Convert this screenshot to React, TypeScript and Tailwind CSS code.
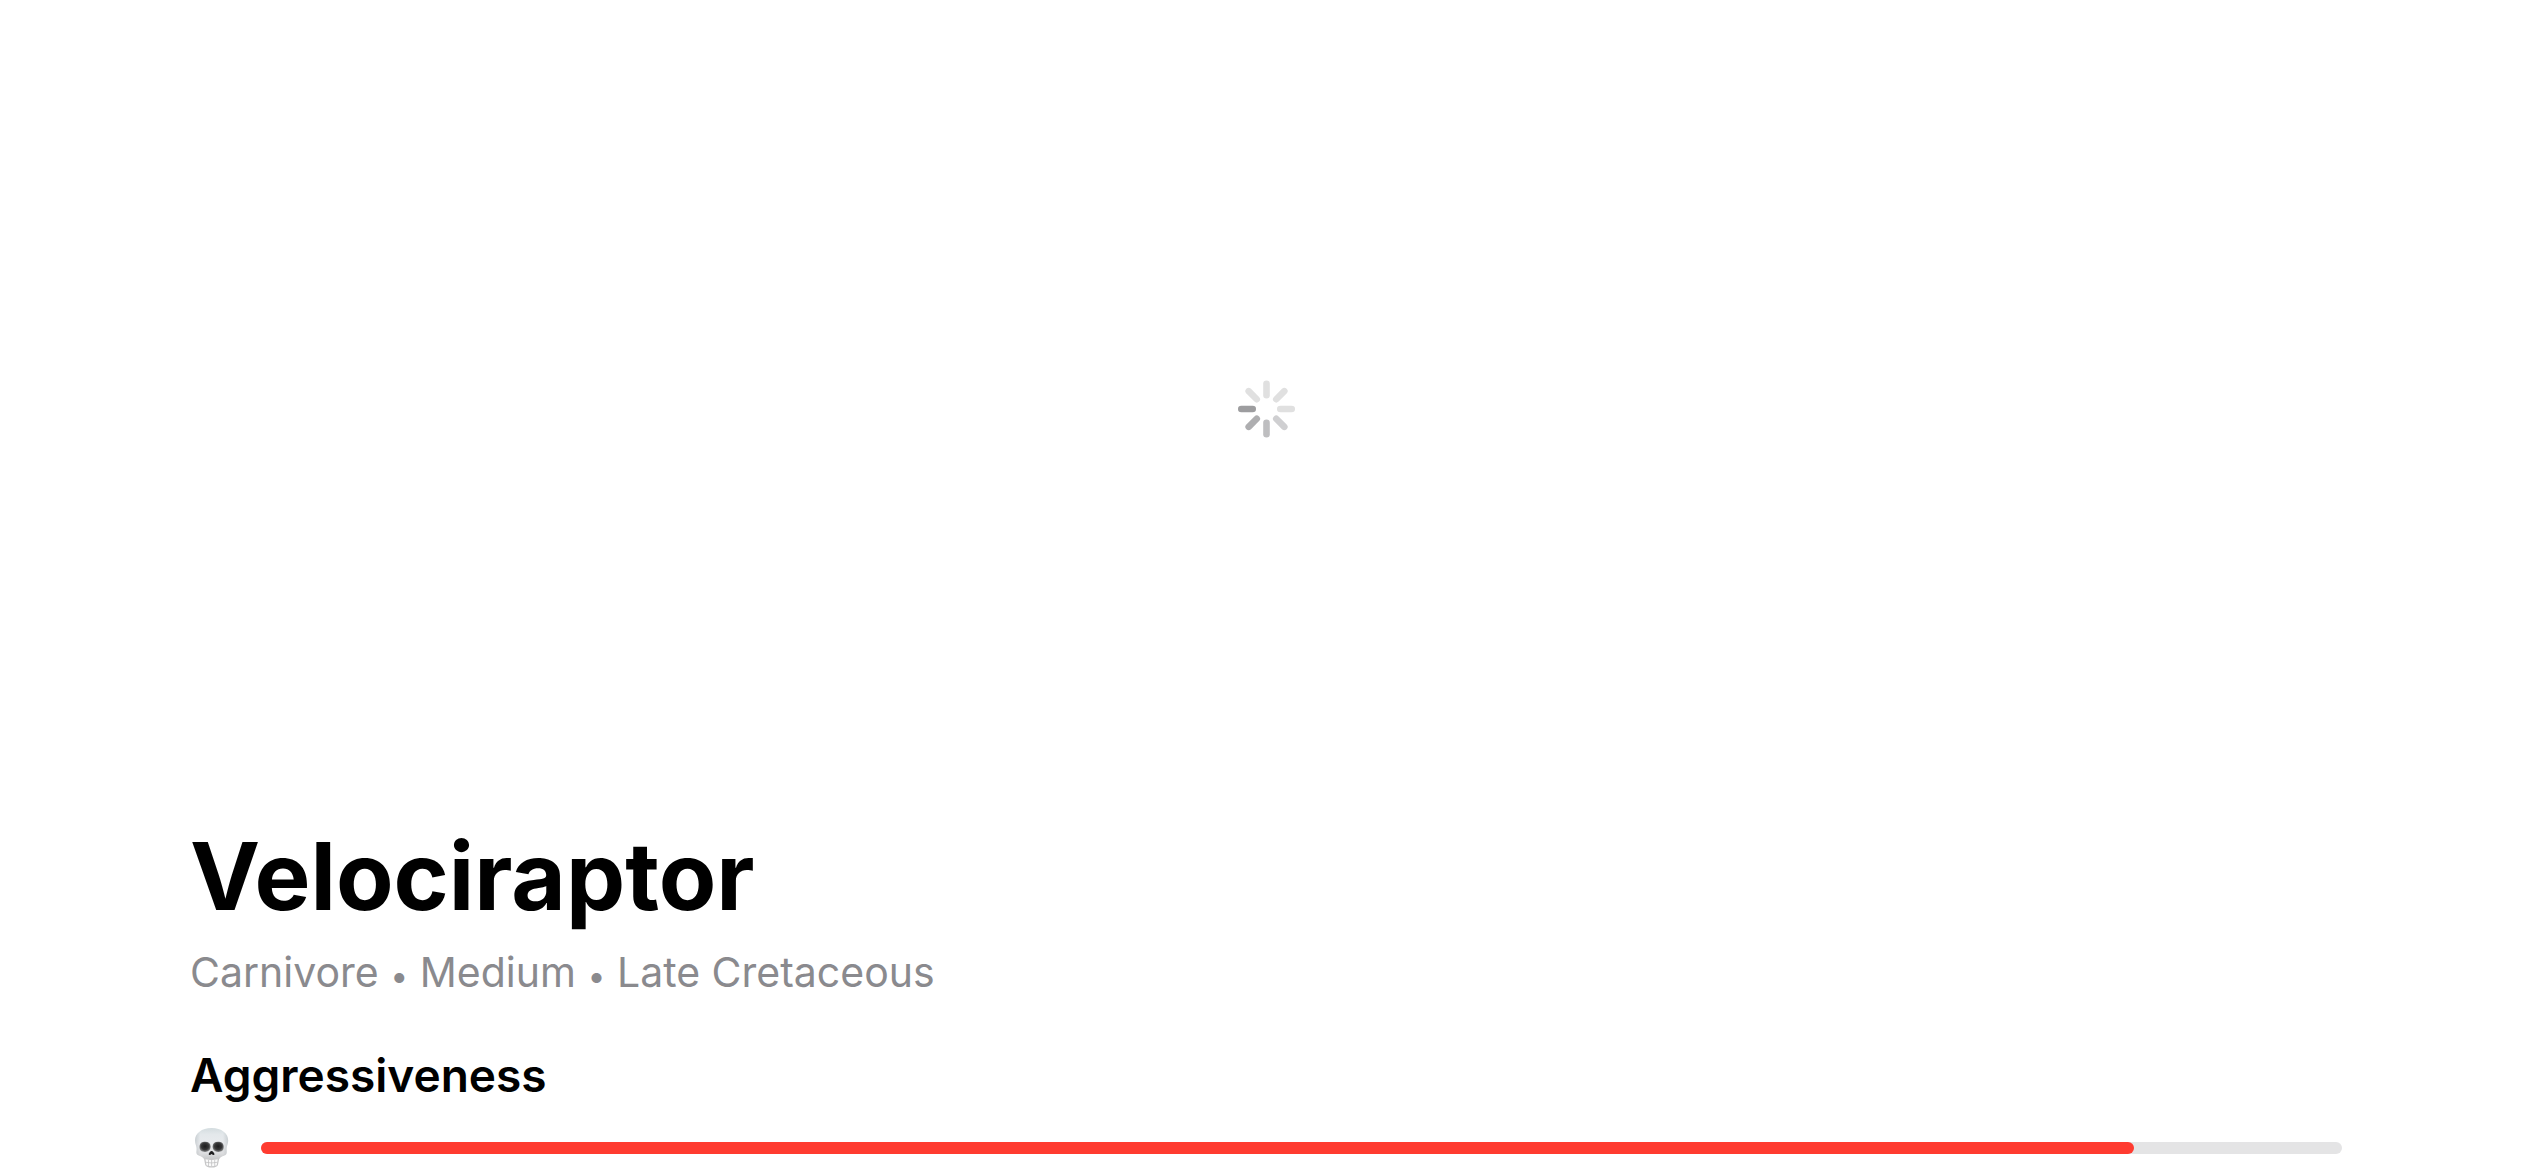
const spokes = ["#e0e0e0", "#e0e0e0", "#e0e0e0", "#cfcfd1", "#bebec0", "#aeaeb0", "#9d9d9f", "#e0e0e0"];

function Spinner() {
  return (
    <svg width="58" height="58" viewBox="-29.5 -29 58 58" role="img" aria-label="Loading">
      {spokes.map((c, i) => (
        <rect key={i} x="-3.3" y="-28.5" width="6.6" height="18" rx="3.3" fill={c} transform={`rotate(${i * 45})`} />
      ))}
    </svg>
  );
}

const cranium =
  "M21.600 1C11.500 1 5 6.500 5 13.500c0 3.500 1.500 5 1.600 8 .1 3-.8 4.500.9 6.300 1.700 1.500 4.500 1.200 6.500 4.300q7.600 1.500 15.200 0c2-3.100 4.800-2.800 6.500-4.300 1.700-1.800.8-3.300.9-6.300.1-3 1.600-4.500 1.600-8C38.200 6.500 31.700 1 21.600 1Z";

function Skull() {
  return (
    <svg width="42" height="42" viewBox="0 0 42 42" role="img" aria-label="Skull">
      <defs>
        <linearGradient id="bone" x1="0" y1="0" x2="0" y2="1">
          <stop offset="0" stopColor="#d3dcdf" />
          <stop offset="0.2" stopColor="#e3e8eb" />
          <stop offset="0.5" stopColor="#e9ebee" />
          <stop offset="0.8" stopColor="#dcdddf" />
          <stop offset="1" stopColor="#c4c5c6" />
        </linearGradient>
        <linearGradient id="edge" x1="0" y1="0" x2="1" y2="0">
          <stop offset="0" stopColor="#9fa8ac" stopOpacity="0.4" />
          <stop offset="0.16" stopColor="#9fa8ac" stopOpacity="0" />
          <stop offset="0.84" stopColor="#9fa8ac" stopOpacity="0" />
          <stop offset="1" stopColor="#9fa8ac" stopOpacity="0.4" />
        </linearGradient>
        <radialGradient id="socket" cx="0.5" cy="0.45" r="0.55">
          <stop offset="0" stopColor="#1c1c1d" />
          <stop offset="0.6" stopColor="#363637" />
          <stop offset="1" stopColor="#858687" />
        </radialGradient>
      </defs>
      <path d="M13.500 29h16.200c-.8 3-1 6-1.700 8.700q-.8 2.800-6.400 2.800t-6.400-2.800C14.500 35 14.300 32 13.500 29Z" fill="#c6c6c7" />
      <path d={cranium} fill="url(#bone)" />
      <path d={cranium} fill="url(#edge)" />
      <path d="M9.500 20c0-4 2.500-5.200 5.700-5.200 3.500 0 5.400 1.600 5.400 4.700 0 3.300-2.300 5.400-5.600 5.400-3.400 0-5.500-1.600-5.500-4.900Z" fill="url(#socket)" />
      <path d="M33.700 20c0-4-2.500-5.200-5.700-5.200-3.500 0-5.400 1.600-5.400 4.700 0 3.300 2.300 5.400 5.600 5.400 3.400 0 5.500-1.600 5.500-4.900Z" fill="url(#socket)" />
      <path d="M21.600 24c-1.100 0-2.900 2.200-2.900 3.200 0 1.100 1.700.9 2.900-.2 1.200 1.100 2.900 1.300 2.900.2 0-1-1.800-3.200-2.900-3.200Z" fill="#1d1d1e" />
      <path d="M15.500 32.300q6.100 1.400 12.200 0l-1 6q-5.100 1.800-10.200 0Z" fill="#fafafa" />
      <path d="M15.900 35.300q5.700 1.300 11.400 0M18.500 33v6M21.600 33v6.300M24.700 33v6" fill="none" stroke="#bcbcbd" strokeWidth="0.7" />
    </svg>
  );
}

function Bullet() {
  return <span className="text-[32px] leading-none">•</span>;
}

export default function App() {
  return (
    <main className="h-screen overflow-hidden bg-white font-['Inter',sans-serif] text-black">
      <div className="flex h-[817px] items-center justify-center"><Spinner /></div>
      <section className="px-[190px]">
        <h1 className="text-[94px] leading-[118px] font-bold">Velociraptor</h1>
        <p className="mt-3 text-[41px] leading-[50px] text-[#8a8a8e]">
          Carnivore <Bullet /> Medium <Bullet /> Late Cretaceous
        </p>
        <h2 id="aggressiveness" className="mt-12 text-[46px] leading-[60px] font-semibold">Aggressiveness</h2>
        <div className="mt-[22px] flex items-center gap-[29px]">
          <Skull />
          <div
            role="progressbar"
            aria-labelledby="aggressiveness"
            aria-valuenow={90}
            aria-valuemin={0}
            aria-valuemax={100}
            className="h-3 flex-1 rounded-full bg-[#e4e4e5]"
          >
            <div className="h-3 w-[90%] rounded-full bg-[#ff3b30]" />
          </div>
        </div>
      </section>
    </main>
  );
}
